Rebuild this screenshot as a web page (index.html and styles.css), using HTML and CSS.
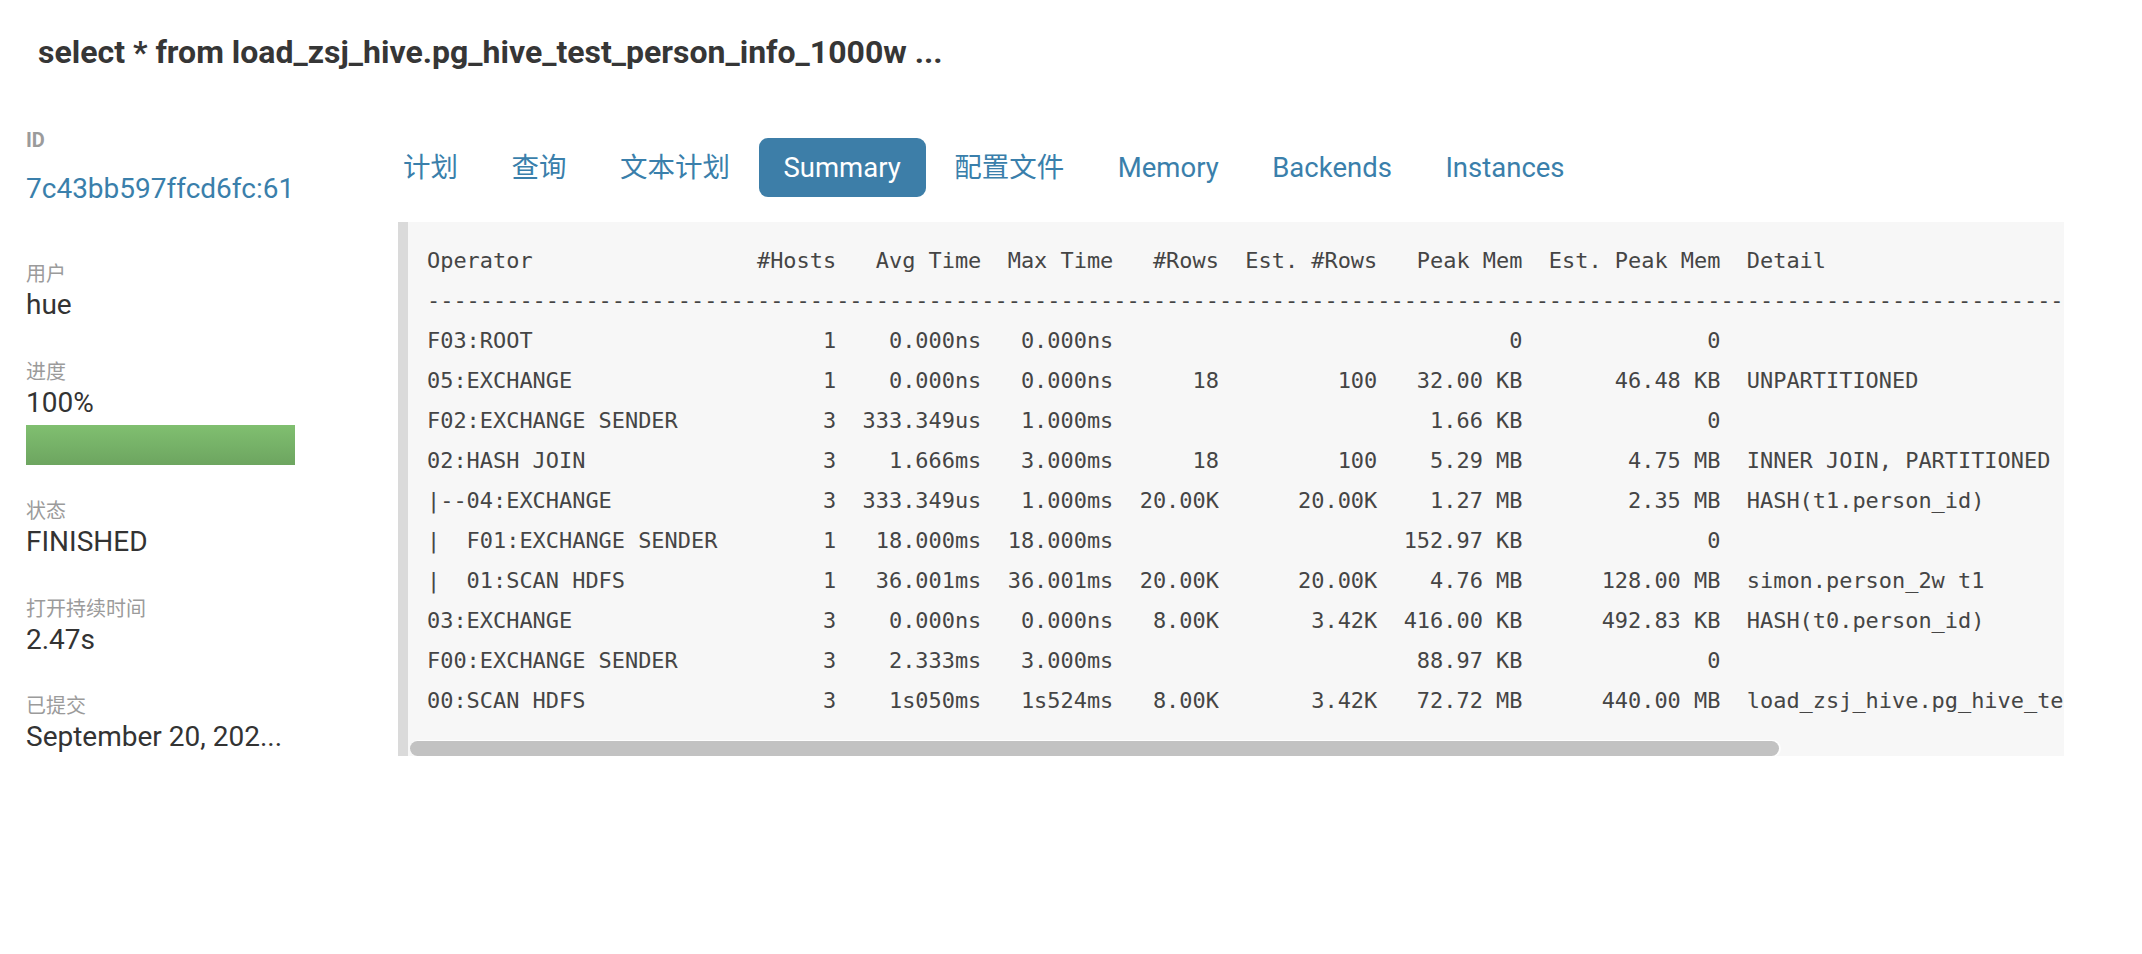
FILE: index.html
```html
<!DOCTYPE html>
<html lang="zh-CN">
<head>
<meta charset="utf-8">
<title>Query</title>
<link rel="stylesheet" href="styles.css">
</head>
<body>
<div class="page">
  <h1 class="title">select * from load_zsj_hive.pg_hive_test_person_info_1000w ...</h1>
  <div class="layout">
    <aside class="sidebar">
      <div class="field-id">
        <div class="id-label">ID</div>
        <a class="id-value" href="#">7c43bb597ffcd6fc:61</a>
      </div>
      <div class="field">
        <div class="label">用户</div>
        <div class="value">hue</div>
      </div>
      <div class="field">
        <div class="label">进度</div>
        <div class="value">100%</div>
        <div class="progress"><div class="progress-bar" style="width:100%"></div></div>
      </div>
      <div class="field">
        <div class="label">状态</div>
        <div class="value">FINISHED</div>
      </div>
      <div class="field">
        <div class="label">打开持续时间</div>
        <div class="value">2.47s</div>
      </div>
      <div class="field">
        <div class="label">已提交</div>
        <div class="value">September 20, 202...</div>
      </div>
    </aside>
    <main class="main">
      <ul class="tabs">
        <li><a class="tab" href="#">计划</a></li>
        <li><a class="tab" href="#">查询</a></li>
        <li><a class="tab" href="#">文本计划</a></li>
        <li><a class="tab active" href="#">Summary</a></li>
        <li><a class="tab" href="#">配置文件</a></li>
        <li><a class="tab" href="#">Memory</a></li>
        <li><a class="tab" href="#">Backends</a></li>
        <li><a class="tab" href="#">Instances</a></li>
      </ul>
      <div class="summary-wrap">
<pre class="summary">
Operator                 #Hosts   Avg Time  Max Time   #Rows  Est. #Rows   Peak Mem  Est. Peak Mem  Detail
---------------------------------------------------------------------------------------------------------------------------------------------------
F03:ROOT                      1    0.000ns   0.000ns                              0              0
05:EXCHANGE                   1    0.000ns   0.000ns      18         100   32.00 KB       46.48 KB  UNPARTITIONED
F02:EXCHANGE SENDER           3  333.349us   1.000ms                        1.66 KB              0
02:HASH JOIN                  3    1.666ms   3.000ms      18         100    5.29 MB        4.75 MB  INNER JOIN, PARTITIONED
|--04:EXCHANGE                3  333.349us   1.000ms  20.00K      20.00K    1.27 MB        2.35 MB  HASH(t1.person_id)
|  F01:EXCHANGE SENDER        1   18.000ms  18.000ms                      152.97 KB              0
|  01:SCAN HDFS               1   36.001ms  36.001ms  20.00K      20.00K    4.76 MB      128.00 MB  simon.person_2w t1
03:EXCHANGE                   3    0.000ns   0.000ns   8.00K       3.42K  416.00 KB      492.83 KB  HASH(t0.person_id)
F00:EXCHANGE SENDER           3    2.333ms   3.000ms                       88.97 KB              0
00:SCAN HDFS                  3    1s050ms   1s524ms   8.00K       3.42K   72.72 MB      440.00 MB  load_zsj_hive.pg_hive_test_person_info_1000w t0</pre>
        <div class="scroll-thumb" style="width:1369px"></div>
      </div>
    </main>
  </div>
</div>
</body>
</html>
```

FILE: styles.css
```css
* {
  box-sizing: border-box;
}

html, body {
  margin: 0;
  padding: 0;
  background: #ffffff;
}

body {
  font-family: Roboto, "Noto Sans CJK SC", "Noto Sans", sans-serif;
  color: #333333;
  width: 2142px;
  height: 954px;
  overflow: hidden;
}

.page {
  padding: 32px 78px 0 0;
}

.title {
  margin: 0 0 56px 38px;
  font-size: 32px;
  line-height: 40px;
  font-weight: 700;
  color: #363636;
  white-space: nowrap;
}

.layout {
  display: flex;
  align-items: flex-start;
}

.sidebar {
  width: 378px;
  flex: none;
  padding-left: 26px;
}

.id-label {
  font-size: 20px;
  line-height: 24px;
  font-weight: 700;
  color: #9b9b9b;
}

.id-value {
  display: block;
  margin-top: 17px;
  font-size: 28px;
  line-height: 40px;
  color: #3a7fab;
  text-decoration: none;
}

.field {
  margin-top: 35.5px;
}

.field-id + .field {
  margin-top: 54px;
}

.label {
  font-size: 20px;
  line-height: 22px;
  color: #9b9b9b;
}

.value {
  font-size: 28px;
  line-height: 40px;
  color: #333333;
  white-space: nowrap;
}

.progress {
  margin-top: 2px;
  width: 269px;
  height: 40px;
  background: #f2f2f2;
}

.progress-bar {
  height: 100%;
  background: linear-gradient(#80bf70, #6da560);
}

.main {
  flex: 1;
  min-width: 0;
}

.tabs {
  list-style: none;
  margin: 10px 0 0 0;
  padding: 0;
  display: flex;
  gap: 3.5px;
}

.tab {
  display: block;
  padding: 0 25px;
  height: 59px;
  line-height: 59px;
  font-size: 27.5px;
  color: #3a7fab;
  text-decoration: none;
  border-radius: 9px;
  white-space: nowrap;
}

.tab.active {
  background: #3d7ea8;
  color: #ffffff;
}

.summary-wrap {
  position: relative;
  margin: 24.7px 0 0 20px;
}

.summary {
  margin: 0;
  padding: 19px 30px 35px 19px;
  border-left: 10px solid #dadada;
  background: #f7f7f7;
  font-family: "DejaVu Sans Mono", "Liberation Mono", monospace;
  font-size: 21.93px;
  line-height: 40px;
  color: #454545;
  overflow: hidden;
  white-space: pre;
}

.scroll-thumb {
  position: absolute;
  left: 12px;
  bottom: 0;
  height: 15px;
  background: #c2c2c2;
  border-radius: 8px;
  box-shadow: 1px 0 0 1px rgba(255, 255, 255, 0.8);
}
```
